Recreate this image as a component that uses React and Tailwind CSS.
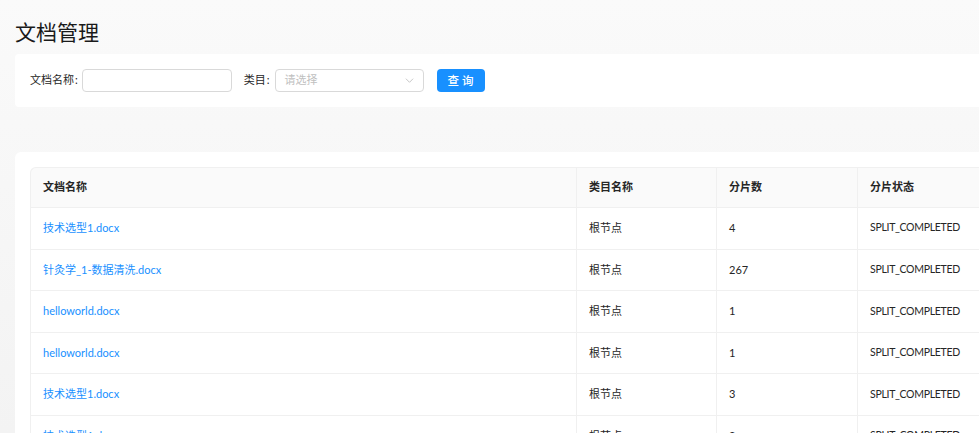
import React from 'react';

const rows = [
  { name: '技术选型1.docx', cat: '根节点', count: '4', status: 'SPLIT_COMPLETED' },
  { name: '针灸学_1-数据清洗.docx', cat: '根节点', count: '267', status: 'SPLIT_COMPLETED' },
  { name: 'helloworld.docx', cat: '根节点', count: '1', status: 'SPLIT_COMPLETED' },
  { name: 'helloworld.docx', cat: '根节点', count: '1', status: 'SPLIT_COMPLETED' },
  { name: '技术选型1.docx', cat: '根节点', count: '3', status: 'SPLIT_COMPLETED' },
  { name: '技术选型1.docx', cat: '根节点', count: '2', status: 'SPLIT_COMPLETED' },
];

const font = { fontFamily: 'Lato, "Noto Sans CJK SC", sans-serif' };

const App = () => {
  return (
    <div
      className="w-[979px] h-[433px] overflow-hidden bg-gradient-to-b from-[#fafafa] to-[#f3f3f3] text-[#262626]"
      style={font}
    >
      <div className="w-[1100px] pl-[15px] pt-[15px]">
        {/* Title */}
        <h1 className="h-[34px] leading-[34px] mb-[5px] text-[21px] font-normal text-[#1a1a1a]">文档管理</h1>

        {/* Search form */}
        <div className="bg-white rounded-[4px] h-[53px] px-[15px] flex items-center text-[11px]">
          <label className="flex items-center">
            文档名称<span className="ml-[1px] mr-[4px]">:</span>
          </label>
          <div className="w-[150px] h-[23px] border border-[#d9d9d9] rounded-[4px] bg-white" />
          <label className="flex items-center ml-[12px]">
            类目<span className="ml-[1px] mr-[5px]">:</span>
          </label>
          <div className="w-[149px] h-[23px] border border-[#d9d9d9] rounded-[4px] bg-white flex items-center justify-between pl-[9px] pr-[9px]">
            <span className="text-[#bfbfbf]">请选择</span>
            <svg width="9" height="9" viewBox="0 0 10 10" fill="none" stroke="#bfbfbf" strokeWidth="1">
              <path d="M1 3l4 4 4-4" />
            </svg>
          </div>
          <button className="ml-[13px] w-[48px] h-[23px] rounded-[4px] bg-[#1890ff] text-white text-[11.5px] font-medium tracking-[3px] pl-[3px]">
            查询
          </button>
        </div>

        {/* Table card */}
        <div className="mt-[45px] bg-white rounded-[6px] p-[15px]">
          <table className="table-fixed border-separate border-spacing-0 text-[11px]">
            <colgroup>
              <col className="w-[546px]" />
              <col className="w-[140px]" />
              <col className="w-[141px]" />
              <col className="w-[228px]" />
            </colgroup>
            <thead>
              <tr className="bg-[#fafafa]">
                {['文档名称', '类目名称', '分片数', '分片状态'].map((h, i) => (
                  <th
                    key={h}
                    className={
                      'h-[41px] px-[12px] text-left font-semibold text-[#262626] border-t border-b border-[#f0f0f0] ' +
                      (i === 0 ? 'border-l rounded-tl-[6px] ' : 'border-l ')
                    }
                  >
                    {h}
                  </th>
                ))}
              </tr>
            </thead>
            <tbody>
              {rows.map((r, i) => (
                <tr key={i}>
                  <td className="h-[41.6px] px-[12px] border-b border-l border-[#f0f0f0] text-[#1890ff]">{r.name}</td>
                  <td className="h-[41.6px] px-[12px] border-b border-l border-[#f0f0f0]">{r.cat}</td>
                  <td className="h-[41.6px] px-[12px] border-b border-l border-[#f0f0f0]">{r.count}</td>
                  <td className="h-[41.6px] px-[12px] border-b border-l border-[#f0f0f0] text-[10.5px] tracking-[-0.3px]">
                    {r.status}
                  </td>
                </tr>
              ))}
            </tbody>
          </table>
        </div>
      </div>
    </div>
  );
};

export default App;
